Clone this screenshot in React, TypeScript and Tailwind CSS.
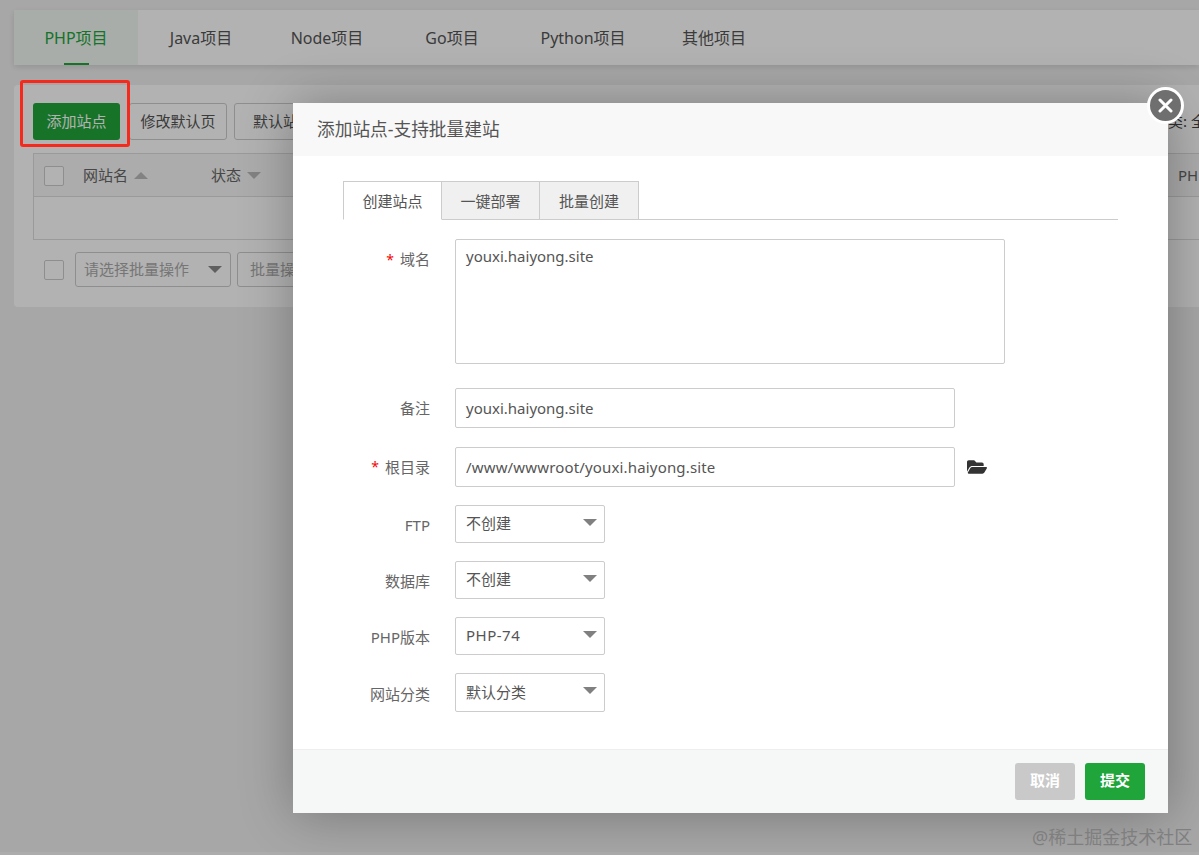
import type { ReactNode } from "react";
import { FaFolderOpen } from "react-icons/fa";

const font = "font-['Noto_Sans','Noto_Sans_CJK_SC',sans-serif]";

function Arrow({ className = "" }: { className?: string }) {
  return (
    <svg width="14" height="7" viewBox="0 0 14 7" className={className}>
      <path d="M0 0H14L7 7Z" fill="currentColor" />
    </svg>
  );
}

function Check() {
  return <span className="block w-5 h-5 shrink-0 border border-[#ccc] rounded-[2px] bg-white" />;
}

function Label({ text, required }: { text: string; required?: boolean }) {
  return (
    <div className="w-[87px] shrink-0 flex justify-end items-center gap-[6px] text-[15px] text-[#666] leading-none">
      {required && <span className="text-[#ef0808] text-[14px] leading-none">*</span>}
      <span>{text}</span>
    </div>
  );
}

function TextRow({ label, value, required, mb, tracking = "", children }: { label: string; value: string; required?: boolean; mb: string; tracking?: string; children?: ReactNode }) {
  return (
    <div className={`flex items-center ${mb}`}>
      <Label text={label} required={required} />
      <div className={`ml-[25px] w-[500px] h-10 border border-[#ccc] rounded-[2px] px-[10px] flex items-center text-[15px] text-[#555] ${tracking}`}>
        {value}
      </div>
      {children}
    </div>
  );
}

function SelectRow({ label, value, h, mb, tracking = "" }: { label: string; value: string; h: string; mb: string; tracking?: string }) {
  return (
    <div className={`flex items-center ${mb}`}>
      <div className="pt-[3px]"><Label text={label} /></div>
      <div className={`ml-[25px] w-[150px] ${h} border border-[#ccc] rounded-[2px] pl-[10px] pr-[7px] flex items-center justify-between text-[15px] text-[#555]`}>
        <span className={`-mt-[1px] ${tracking}`}>{value}</span>
        <Arrow className="text-[#808080] -mt-[4px]" />
      </div>
    </div>
  );
}

function BgTab({ text, w }: { text: string; w: string }) {
  return <div className={`${w} h-full flex items-center justify-center text-[16px] text-[#555]`}>{text}</div>;
}

export default function App() {
  return (
    <div className={`relative w-[1199px] h-[855px] overflow-hidden bg-[#f0f0f0] ${font}`}>
      {/* page underneath */}
      <div className="pl-[14px] pt-[10px]">
        <div className="h-[55px] bg-white flex shadow-[0_2px_6px_rgba(0,0,0,0.12)]">
          <div className="relative w-[124px] h-full bg-[#f3f8f3] flex items-center justify-center text-[16px] text-[#20a53a]">
            PHP项目
            <span className="absolute left-[50px] bottom-0 w-[25px] h-[2px] bg-[#20a53a]" />
          </div>
          <BgTab text="Java项目" w="w-[126px]" />
          <BgTab text="Node项目" w="w-[126px]" />
          <BgTab text="Go项目" w="w-[124px]" />
          <BgTab text="Python项目" w="w-[138px]" />
          <BgTab text="其他项目" w="w-[124px]" />
        </div>

        <div className="mt-[20px] h-[222px] bg-white rounded-l-[4px] pl-[19px] pt-[18px] overflow-hidden">
          <div className="flex items-center h-[37px] gap-[7px] text-[15px] text-[#555]">
            <div className="w-[87px] h-full bg-[#20a53a] text-white rounded-[3px] flex items-center justify-center mr-[2px]">添加站点</div>
            <div className="w-[98px] h-full border border-[#ccc] rounded-[3px] flex items-center justify-center">修改默认页</div>
            <div className="w-[98px] h-full border border-[#ccc] rounded-[3px] flex items-center justify-center">默认站点</div>
            <div className="ml-auto text-[15px] text-[#444] whitespace-nowrap w-[46px]">分类: 全部</div>
          </div>

          <div className="mt-[13px] w-[1200px] h-[87px] border border-[#ddd]">
            <div className="h-[43px] bg-[#f6f6f6] border-b border-[#ddd] flex items-center pl-[10px] pt-[1px] text-[15px] text-[#666]">
              <Check />
              <span className="ml-[19px]">网站名</span>
              <Arrow className="ml-[6px] text-[#bbb] rotate-180" />
              <span className="ml-[63px]">状态</span>
              <Arrow className="ml-[6px] text-[#bbb]" />
              <span className="ml-[917px]">PHP</span>
            </div>
          </div>

          <div className="mt-[12px] h-[35px] flex items-center text-[15px] text-[#aaa]">
            <div className="ml-[11px]"><Check /></div>
            <div className="ml-[11px] w-[156px] h-full border border-[#ccc] rounded-[3px] pl-2 pr-[8px] flex items-center justify-between">
              请选择批量操作
              <Arrow className="text-[#888]" />
            </div>
            <div className="ml-[6px] w-[100px] h-full border border-[#ccc] rounded-[3px] px-3 flex items-center">批量操作</div>
          </div>
        </div>
      </div>

      {/* lighter strip at the very bottom of the page */}
      <div className="absolute left-0 right-0 bottom-0 h-[3px] bg-white/40" />

      {/* dimming layer */}
      <div className="absolute inset-0 bg-black/30" />

      {/* highlight drawn on the screenshot */}
      <div className="absolute left-[20px] top-[80px] w-[110px] h-[67px] border-[3px] border-[#f5291c] rounded-[3px]" />

      {/* dialog */}
      <div className="absolute left-[293px] top-[103px] w-[875px] h-[710px] bg-white flex flex-col shadow-[1px_1px_50px_rgba(0,0,0,0.3)]">
        <div className="h-[53px] shrink-0 bg-[#f8f8f8] pl-[24px] flex items-center text-[17.7px] text-[#555]">添加站点-支持批量建站</div>

        <div className="flex-1 pl-[50px] pr-[50px] pt-[25px]">
          <div className="h-[39px] flex border-b border-[#ccc] text-[15px] text-[#555]">
            <div className="w-[99px] h-[39px] border border-[#ccc] border-b-white bg-white flex items-center justify-center pt-[2px]">创建站点</div>
            <div className="w-[98px] h-[39px] border-r border-t border-b border-[#ccc] bg-[#f0f0f0] flex items-center justify-center pt-[2px]">一键部署</div>
            <div className="w-[99px] h-[39px] border-r border-t border-b border-[#ccc] bg-[#f0f0f0] flex items-center justify-center pt-[2px]">批量创建</div>
          </div>

          <div className="pt-[19px]">
            <div className="flex items-start mb-[24px]">
              <div className="pt-[13px]"><Label text="域名" required /></div>
              <div className="ml-[25px] w-[550px] h-[125px] border border-[#ccc] rounded-[2px] px-[10px] pt-[5px] text-[15px] text-[#555]">youxi.haiyong.site</div>
            </div>
            <TextRow label="备注" value="youxi.haiyong.site" mb="mb-[19px]" />
            <TextRow label="根目录" value="/www/wwwroot/youxi.haiyong.site" required mb="mb-[18px]" tracking="tracking-[0.16px]">
              <FaFolderOpen className="ml-[12px] text-[#333]" size={20} />
            </TextRow>
            <SelectRow label="FTP" value="不创建" h="h-[38px]" mb="mb-[18px]" />
            <SelectRow label="数据库" value="不创建" h="h-[38px]" mb="mb-[18px]" />
            <SelectRow label="PHP版本" value="PHP-74" h="h-[38px]" mb="mb-[18px]" tracking="tracking-[0.5px]" />
            <SelectRow label="网站分类" value="默认分类" h="h-[39px]" mb="" />
          </div>
        </div>

        <div className="h-[64px] shrink-0 bg-[#f6f8f8] border-t border-[#eee] flex items-center justify-end pr-[23px] gap-[10px] text-[15px] text-white font-bold">
          <div className="w-[60px] h-[37px] bg-[#c9c9c9] rounded-[3px] flex items-center justify-center pb-[2px]">取消</div>
          <div className="w-[60px] h-[37px] bg-[#20a53a] rounded-[3px] flex items-center justify-center pb-[2px]">提交</div>
        </div>
      </div>

      {/* close */}
      <div className="absolute left-[1147px] top-[87px] w-[37px] h-[37px] rounded-full bg-[#6f6f6f] border-[3px] border-white flex items-center justify-center">
        <svg width="15" height="15" viewBox="0 0 15 15">
          <path d="M2 2L13 13M13 2L2 13" stroke="white" strokeWidth="3" strokeLinecap="round" />
        </svg>
      </div>

      {/* watermark */}
      <div className="absolute left-[1032px] top-[825px] text-[18px] leading-[24px] text-[#7f7f7f] whitespace-nowrap">@稀土掘金技术社区</div>
    </div>
  );
}
